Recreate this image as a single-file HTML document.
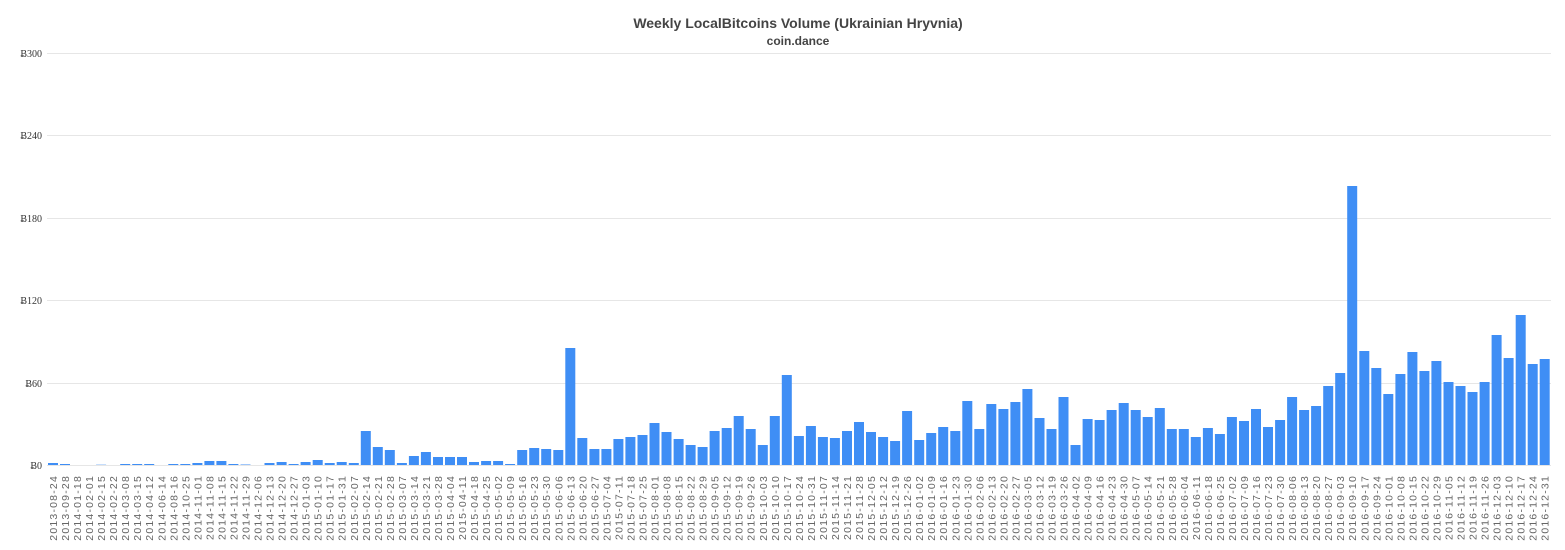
<!DOCTYPE html>
<html><head><meta charset="utf-8"><style>
html,body{margin:0;padding:0;background:#fff;width:1565px;height:550px;overflow:hidden}
svg{display:block}
.t{font-family:"Liberation Sans",sans-serif;font-weight:bold;fill:#444}
.y{font-family:"Liberation Serif",serif;font-size:10px;fill:#333}
#labels text{font-family:"Liberation Sans",sans-serif;font-size:10.5px;fill:#666;letter-spacing:1.2px}
</style></head><body>
<svg id="c" width="1565" height="550" xmlns="http://www.w3.org/2000/svg">
<text class="t" x="798" y="28" text-anchor="middle" font-size="14">Weekly LocalBitcoins Volume (Ukrainian Hryvnia)</text>
<text class="t" x="798" y="45" text-anchor="middle" font-size="12">coin.dance</text>
<g stroke="#e6e6e6" stroke-width="1">
<line x1="47" x2="1551" y1="53.5" y2="53.5"/>
<line x1="47" x2="1551" y1="135.5" y2="135.5"/>
<line x1="47" x2="1551" y1="218.5" y2="218.5"/>
<line x1="47" x2="1551" y1="300.5" y2="300.5"/>
<line x1="47" x2="1551" y1="383.5" y2="383.5"/>
<line x1="47" x2="1551" y1="465.5" y2="465.5"/>
</g>
<text class="y" x="42" y="57" text-anchor="end">Ƀ300</text>
<text class="y" x="42" y="139" text-anchor="end">Ƀ240</text>
<text class="y" x="42" y="222" text-anchor="end">Ƀ180</text>
<text class="y" x="42" y="304" text-anchor="end">Ƀ120</text>
<text class="y" x="42" y="387" text-anchor="end">Ƀ60</text>
<text class="y" x="42" y="469" text-anchor="end">Ƀ0</text>
<g id="bars" fill="#3f8ef5"></g>
<g id="labels">
<text>2013-08-24</text><text>2013-09-28</text><text>2014-01-18</text><text>2014-02-01</text><text>2014-02-15</text><text>2014-02-22</text><text>2014-03-08</text><text>2014-03-15</text><text>2014-04-12</text><text>2014-06-14</text><text>2014-08-16</text><text>2014-10-25</text><text>2014-11-01</text><text>2014-11-08</text><text>2014-11-15</text><text>2014-11-22</text><text>2014-11-29</text><text>2014-12-06</text><text>2014-12-13</text><text>2014-12-20</text><text>2014-12-27</text><text>2015-01-03</text><text>2015-01-10</text><text>2015-01-17</text><text>2015-01-31</text>
<text>2015-02-07</text><text>2015-02-14</text><text>2015-02-21</text><text>2015-02-28</text><text>2015-03-07</text><text>2015-03-14</text><text>2015-03-21</text><text>2015-03-28</text><text>2015-04-04</text><text>2015-04-11</text><text>2015-04-18</text><text>2015-04-25</text><text>2015-05-02</text><text>2015-05-09</text><text>2015-05-16</text><text>2015-05-23</text><text>2015-05-30</text><text>2015-06-06</text><text>2015-06-13</text><text>2015-06-20</text><text>2015-06-27</text><text>2015-07-04</text><text>2015-07-11</text><text>2015-07-18</text><text>2015-07-25</text><text>2015-08-01</text><text>2015-08-08</text><text>2015-08-15</text><text>2015-08-22</text><text>2015-08-29</text><text>2015-09-05</text><text>2015-09-12</text><text>2015-09-19</text><text>2015-09-26</text><text>2015-10-03</text><text>2015-10-10</text><text>2015-10-17</text><text>2015-10-24</text><text>2015-10-31</text><text>2015-11-07</text><text>2015-11-14</text><text>2015-11-21</text><text>2015-11-28</text><text>2015-12-05</text><text>2015-12-12</text><text>2015-12-19</text><text>2015-12-26</text>
<text>2016-01-02</text><text>2016-01-09</text><text>2016-01-16</text><text>2016-01-23</text><text>2016-01-30</text><text>2016-02-06</text><text>2016-02-13</text><text>2016-02-20</text><text>2016-02-27</text><text>2016-03-05</text><text>2016-03-12</text><text>2016-03-19</text><text>2016-03-26</text><text>2016-04-02</text><text>2016-04-09</text><text>2016-04-16</text><text>2016-04-23</text><text>2016-04-30</text><text>2016-05-07</text><text>2016-05-14</text><text>2016-05-21</text><text>2016-05-28</text><text>2016-06-04</text><text>2016-06-11</text><text>2016-06-18</text><text>2016-06-25</text><text>2016-07-02</text><text>2016-07-09</text><text>2016-07-16</text><text>2016-07-23</text><text>2016-07-30</text><text>2016-08-06</text><text>2016-08-13</text><text>2016-08-20</text><text>2016-08-27</text><text>2016-09-03</text><text>2016-09-10</text><text>2016-09-17</text><text>2016-09-24</text><text>2016-10-01</text><text>2016-10-08</text><text>2016-10-15</text><text>2016-10-22</text><text>2016-10-29</text><text>2016-11-05</text><text>2016-11-12</text><text>2016-11-19</text><text>2016-11-26</text><text>2016-12-03</text><text>2016-12-10</text><text>2016-12-17</text><text>2016-12-24</text><text>2016-12-31</text>
</g>
</svg>
<script>
var h=[2,1,0,0,0.3,0,1,1,1,0,1,1,2,4,4,1,0.5,0,2,3,1,3,5,2,3,
2,34,18,15,2,9,13,8,8,8,3,4,4,1,15,17,16,15,117,27,16,16,26,28,30,42,33,26,20,18,34,37,49,36,20,49,90,29,39,28,27,34,43,33,28,24,54,25,32,38,34,64,36,61,56,63,76,47,36,68,20,46,45,55,62,55,48,57,36,36,28,37,31,48,44,56,38,45,68,55,59,79,92,279,114,97,71,91,113,94,104,83,79,73,83,130,107,150,101,106];
var g=document.getElementById('bars'),s=12.03,ns='http://www.w3.org/2000/svg';
for(var i=0;i<h.length;i++){if(h[i]<=0)continue;var r=document.createElementNS(ns,'rect');r.setAttribute('x',(48+s*i).toFixed(1));r.setAttribute('width','10');r.setAttribute('y',465-h[i]);r.setAttribute('height',h[i]);g.appendChild(r);}
var ts=document.querySelectorAll('#labels text');
for(var j=0;j<ts.length;j++){var x=53+s*j+4,y=475;ts[j].setAttribute('text-anchor','end');ts[j].setAttribute('transform','translate('+x.toFixed(1)+','+y+') rotate(-90)');}
</script>
</body></html>
